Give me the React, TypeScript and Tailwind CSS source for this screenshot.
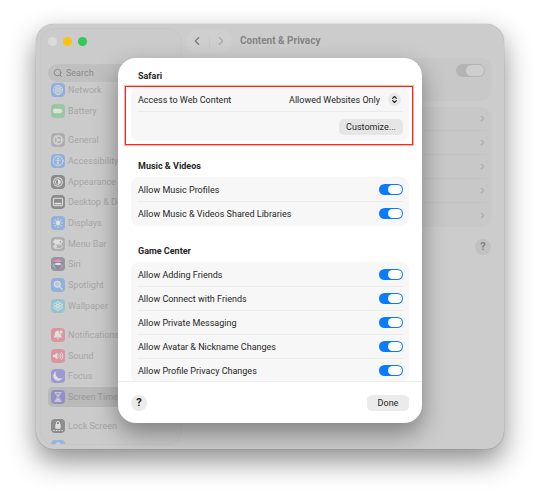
import type { ReactNode } from "react";
import { ChevronLeft, ChevronRight, ChevronsUpDown, Search } from "lucide-react";

type SidebarItem = {
  label: string;
  tint: string;
  glyph: ReactNode;
  selected?: boolean;
};

const white = { fill: "none", stroke: "#fff", strokeWidth: 1.5, strokeLinecap: "round", strokeLinejoin: "round" } as const;

const glyphs = {
  network: (
    <g {...white} strokeWidth={1.2}>
      <circle cx="13" cy="13" r="8.5" />
      <ellipse cx="13" cy="13" rx="4" ry="8.5" />
      <path d="M4.5 13h17M6 8.5c4 2.2 10 2.2 14 0M6 17.5c4-2.2 10-2.2 14 0M13 4.5v17" />
    </g>
  ),
  battery: (
    <g fill="#fff">
      <rect x="4" y="9" width="16" height="8" rx="2.5" />
      <path d="M21 11.5c1.6.4 1.6 2.6 0 3z" />
    </g>
  ),
  general: (
    <g {...white}>
      <circle cx="13" cy="13" r="7.5" strokeWidth="2" />
      <circle cx="13" cy="13" r="9" strokeDasharray="1.2 1.6" strokeLinecap="butt" />
      <circle cx="13" cy="13" r="2" />
      <path d="M15 13h5.5M12 11.3l-3-5M12 14.7l-3 5" />
    </g>
  ),
  accessibility: (
    <g {...white}>
      <circle cx="13" cy="13" r="9" />
      <circle cx="13" cy="8.5" r="1" fill="#fff" />
      <path d="M8.5 11.2l4.5.8 4.5-.8M13 12v3l-2 4.5M13 15l2 4.5" />
    </g>
  ),
  appearance: (
    <g>
      <circle cx="13" cy="13" r="8" {...white} strokeWidth={2} />
      <path d="M13 8a5 5 0 0 1 0 10z" fill="#fff" />
      <path d="M13 8a5 5 0 0 0 0 10" {...white} />
    </g>
  ),
  desktop: (
    <g {...white} strokeWidth={2}>
      <rect x="4.5" y="6" width="17" height="14" rx="2.5" />
      <path d="M8 16h10" strokeWidth="3" />
    </g>
  ),
  displays: (
    <g {...white} strokeWidth={2}>
      <circle cx="13" cy="13" r="3.5" fill="#fff" />
      <path d="M13 5v1M13 20v1M5 13h1M20 13h1M7.4 7.4l.6.6M18 18l.6.6M18.6 7.4l-.6.6M8 18l-.6.6" />
    </g>
  ),
  menuBar: (
    <g {...white}>
      <rect x="5" y="5.5" width="16" height="6.5" rx="3.25" fill="#fff" />
      <rect x="5" y="14.5" width="16" height="6.5" rx="3.25" />
      <circle cx="17.5" cy="8.75" r="1.8" fill="#777" stroke="none" />
      <circle cx="8.5" cy="17.75" r="1.8" fill="#fff" />
    </g>
  ),
  siri: (
    <g>
      <circle cx="13" cy="13" r="10" fill="#2b2440" />
      <path d="M4 9c4-7 14-7 18 1-5-2-12 0-18-1z" fill="#e8408c" />
      <path d="M3.5 11c4 2 3 8 8 11-6-1-9-6-8-11z" fill="#24c0d8" />
      <path d="M22.5 12c0 6-4 10-9 10 5-2 4-7 9-10z" fill="#4a7df0" />
      <path d="M6 13c4-3 10-3 14 0-4 3-10 3-14 0z" fill="#fff" />
    </g>
  ),
  spotlight: (
    <g {...white} strokeWidth={2.2}>
      <circle cx="11.5" cy="11.5" r="5.5" fill="#ffffff80" />
      <path d="M16 16l5 5" />
    </g>
  ),
  wallpaper: (
    <g {...white}>
      <circle cx="13" cy="13" r="2.2" />
      <ellipse cx="13" cy="7.5" rx="2.6" ry="3" />
      <ellipse cx="13" cy="18.5" rx="2.6" ry="3" />
      <ellipse cx="8" cy="10.2" rx="3" ry="2.6" />
      <ellipse cx="18" cy="10.2" rx="3" ry="2.6" />
      <ellipse cx="8" cy="15.8" rx="3" ry="2.6" />
      <ellipse cx="18" cy="15.8" rx="3" ry="2.6" />
    </g>
  ),
  notifications: (
    <g fill="#fff">
      <path d="M12.5 5c-4 0-5.5 3-5.5 6 0 3.5-1 4.5-2.5 6.5h16.5c-1.5-1.5-2.5-3-2.5-5.5a4 4 0 0 1-3.5-6.2C14.3 5.2 13.5 5 12.5 5z" />
      <path d="M10.5 19h4.5a2.3 2.3 0 0 1-4.5 0z" />
      <circle cx="18.5" cy="7.5" r="3" />
    </g>
  ),
  sound: (
    <g>
      <path d="M3.5 10.5h3.5l5-4.5v14l-5-4.5H3.5z" fill="#fff" />
      <path d="M14.5 10.5c1.3 1.5 1.3 3.5 0 5M17 8.5c2.3 2.7 2.3 6.3 0 9M19.5 6.5c3.5 4 3.5 9 0 13" {...white} strokeWidth={1.7} />
    </g>
  ),
  focus: <path d="M10 4.5a9 9 0 1 0 11.5 11.8A8.5 8.5 0 0 1 10 4.5z" fill="#fff" />,
  screenTime: (
    <g>
      <path d="M7 5h12M7 21h12" {...white} strokeWidth={2} />
      <path d="M8.5 5.5c0 4.5 3.3 5 3.3 7.5s-3.3 3-3.3 7.5M17.5 5.5c0 4.5-3.3 5-3.3 7.5s3.3 3 3.3 7.5" {...white} />
      <path d="M10 8.5h6l-3 3.5zM9.5 20c.5-3 2-4 3.5-4s3 1 3.5 4z" fill="#fff" />
    </g>
  ),
  lock: (
    <g>
      <rect x="8" y="9.5" width="10" height="8.5" rx="1.5" fill="#fff" />
      <path d="M10 10V7.5a3 3 0 0 1 6 0V10" {...white} strokeWidth={1.8} />
      <path d="M5 21.5h16" {...white} strokeWidth={2} strokeDasharray="1 4" />
    </g>
  ),
  hand: <path d="M8 12V8m3.3 4V5.5m3.4 6.5V5.5M18 13V8M8 12v4c0 7 10 7 10 0v-3" {...white} strokeWidth={2.4} />,
};

const groups: { height: string; items: SidebarItem[] }[] = [
  {
    height: "h-[41px]",
    items: [
      { label: "Network", tint: "bg-[#3b88f5]", glyph: glyphs.network },
      { label: "Battery", tint: "bg-[#4cc864]", glyph: glyphs.battery },
    ],
  },
  {
    height: "h-[186px]",
    items: [
      { label: "General", tint: "bg-[#85858a]", glyph: glyphs.general },
      { label: "Accessibility", tint: "bg-[#3b88f5]", glyph: glyphs.accessibility },
      { label: "Appearance", tint: "bg-[#303033]", glyph: glyphs.appearance },
      { label: "Desktop & Dock", tint: "bg-[#303033]", glyph: glyphs.desktop },
      { label: "Displays", tint: "bg-[#3b88f5]", glyph: glyphs.displays },
      { label: "Menu Bar", tint: "bg-[#85858a]", glyph: glyphs.menuBar },
      { label: "Siri", tint: "bg-[#54405c]", glyph: glyphs.siri },
      { label: "Spotlight", tint: "bg-[#3b88f5]", glyph: glyphs.spotlight },
      { label: "Wallpaper", tint: "bg-[#3dbdd8]", glyph: glyphs.wallpaper },
    ],
  },
  {
    height: "h-[82px]",
    items: [
      { label: "Notifications", tint: "bg-[#f5455a]", glyph: glyphs.notifications },
      { label: "Sound", tint: "bg-[#f5455f]", glyph: glyphs.sound },
      { label: "Focus", tint: "bg-[#5a50dc]", glyph: glyphs.focus },
      { label: "Screen Time", tint: "bg-[#5a50dc]", glyph: glyphs.screenTime, selected: true },
    ],
  },
  {
    height: "h-[41px]",
    items: [
      { label: "Lock Screen", tint: "bg-[#303033]", glyph: glyphs.lock },
      { label: "", tint: "bg-[#3b98f5]", glyph: glyphs.hand },
    ],
  },
];

function Sidebar() {
  return (
    <aside className="m-1 flex w-[142px] shrink-0 flex-col overflow-hidden rounded-[14px] border border-[#c7c7c7] bg-[#cbcbcb] px-[7px]">
      <div className="mt-2 flex gap-[6px]">
        <button aria-label="Close" className="size-[9px] rounded-full bg-[#dadada]" />
        <button aria-label="Minimize" className="size-[9px] rounded-full bg-[#fcc212]" />
        <button aria-label="Zoom" className="size-[9px] rounded-full bg-[#34c759]" />
      </div>
      <label className="mt-[18px] flex h-[18px] shrink-0 items-center gap-[3px] rounded-full bg-[#c0c0c0] pl-[5px] text-[#858585]">
        <Search size={10} strokeWidth={2.2} className="shrink-0" />
        <input
          type="search"
          aria-label="Search"
          placeholder="Search"
          className="w-full min-w-0 bg-transparent text-[9px] leading-3 outline-none placeholder:text-[#8a8a8a]"
        />
      </label>
      <nav className="-mt-[2px] flex flex-col gap-[9px]">
        {groups.map((group, i) => (
          <ul key={i} className={`flex shrink-0 flex-col ${group.height}`}>
            {group.items.map((item) => (
              <li key={item.label} className="flex min-h-0 flex-1">
                <a
                  href="#"
                  className={`flex flex-1 items-center gap-[3px] rounded-[5px] pl-[3px] text-[9px] leading-3 whitespace-nowrap ${item.selected ? "bg-[#b9b9b9] text-[#999999]" : "text-[#a6a6a6]"}`}
                >
                  <span className={`size-[14px] shrink-0 overflow-hidden rounded-[4px] opacity-40 ${item.tint}`}>
                    <svg viewBox="0 0 26 26" className="size-full" aria-hidden="true">
                      {item.glyph}
                    </svg>
                  </span>
                  {item.label}
                </a>
              </li>
            ))}
          </ul>
        ))}
      </nav>
    </aside>
  );
}

function ContentPane() {
  return (
    <main className="flex min-w-0 flex-1 flex-col pr-[13px]">
      <header className="mt-[5px] flex h-6 items-center gap-2">
        <div className="flex h-6 w-[46px] items-center rounded-full bg-[#cfcfcf]">
          <button aria-label="Back" className="flex flex-1 justify-center text-[#777777]">
            <ChevronLeft size={14} strokeWidth={2} />
          </button>
          <span className="h-3 w-px bg-[#c8c8c8]" />
          <button aria-label="Forward" className="flex flex-1 justify-center text-[#aaaaaa]">
            <ChevronRight size={14} strokeWidth={2} />
          </button>
        </div>
        <h1 className="text-[10px] leading-4 font-bold text-[#858585]">Content &amp; Privacy</h1>
      </header>
      <section className="mt-[5px] ml-2 h-[43px] rounded-[9px] bg-[#c8c8c8] px-[6px] pt-[6px]">
        <input
          type="checkbox"
          aria-label="Content & Privacy"
          defaultChecked
          className="ml-auto flex h-[13px] w-[29px] appearance-none justify-end rounded-full bg-[#b4b4b4] p-px before:h-full before:w-[18px] before:rounded-full before:bg-[#cecece]"
        />
      </section>
      <ul className="mt-[6px] ml-2 rounded-[9px] bg-[#c8c8c8] px-1">
        {[1, 2, 3, 4, 5].map((n) => (
          <li key={n} className="flex h-6 items-center justify-end border-b border-[#c2c2c2] last:border-0">
            <ChevronRight size={9} strokeWidth={3} className="text-[#adadad]" />
          </li>
        ))}
      </ul>
      <button
        aria-label="Help"
        className="mt-3 size-4 self-end rounded-full bg-[#c1c1c1] text-[11px] leading-4 font-bold text-[#808080]"
      >
        ?
      </button>
    </main>
  );
}

function ToggleRow({ label }: { label: string }) {
  return (
    <label className="mr-[6px] ml-[7px] flex h-6 items-center justify-between border-b border-[#ebebeb] last:border-b-transparent">
      {label}
      <input
        type="checkbox"
        defaultChecked
        className="flex h-[11px] w-6 appearance-none justify-end rounded-full bg-[#0a7aff] p-px before:h-full before:w-[14px] before:rounded-full before:bg-white"
      />
    </label>
  );
}

function Section({ title, children }: { title: string; children: ReactNode }) {
  return (
    <section>
      <h2 className="mb-[3px] pl-[7px] leading-4 font-bold">{title}</h2>
      <div className="relative rounded-[8px] bg-[#f7f7f7] pt-px">{children}</div>
    </section>
  );
}

function RestrictionsDialog() {
  return (
    <div
      role="dialog"
      aria-label="App restrictions"
      className="flex w-full max-w-[304px] flex-col overflow-hidden rounded-[18px] bg-white text-[9px] leading-3 text-[#262626] shadow-[0_10px_24px_rgba(0,0,0,0.38)]"
    >
      <div className="flex min-h-0 flex-1 flex-col gap-[17px] overflow-hidden px-[13px] pt-[10px]">
        <Section title="Safari">
          <div className="mr-[6px] ml-[7px] flex h-6 items-center justify-between border-b border-[#ebebeb]">
            <label htmlFor="web-access">Access to Web Content</label>
            <div className="relative mr-[2px] flex items-center">
              <select id="web-access" className="appearance-none bg-transparent pr-[21px] outline-none [text-align-last:right]">
                <option>Allowed Websites Only</option>
                <option>Unrestricted</option>
              </select>
              <span className="pointer-events-none absolute right-0 flex size-[13px] items-center justify-center rounded-full bg-[#e8e8e8]">
                <ChevronsUpDown size={9} strokeWidth={3} />
              </span>
            </div>
          </div>
          <div className="mr-[6px] ml-[7px] flex h-[29px] items-center justify-end">
            <button className="h-4 w-16 rounded-[5px] bg-[#e6e6e6]">Customize...</button>
          </div>
          <div className="pointer-events-none absolute -top-px -right-1 -bottom-1 -left-[6px] border border-[#ff2617] shadow-[0_0_0_1px_rgba(255,38,23,0.35)]" />
        </Section>
        <Section title="Music & Videos">
          <ToggleRow label="Allow Music Profiles" />
          <ToggleRow label="Allow Music & Videos Shared Libraries" />
        </Section>
        <Section title="Game Center">
          <ToggleRow label="Allow Adding Friends" />
          <ToggleRow label="Allow Connect with Friends" />
          <ToggleRow label="Allow Private Messaging" />
          <ToggleRow label="Allow Avatar & Nickname Changes" />
          <ToggleRow label="Allow Profile Privacy Changes" />
        </Section>
      </div>
      <footer className="flex h-[42px] shrink-0 items-center justify-between border-t border-[#ededed] px-[13px]">
        <button aria-label="Help" className="size-4 rounded-full bg-[#ebebeb] text-[11px] leading-4 font-bold">
          ?
        </button>
        <button className="h-4 w-[42px] rounded-[5px] bg-[#ebebeb]">Done</button>
      </footer>
    </div>
  );
}

export default function App() {
  return (
    <div className="flex h-screen bg-white px-9 pt-6 pb-12 font-['Roboto','Liberation_Sans',sans-serif]">
      <div className="relative flex flex-1 rounded-[18px] bg-[#cccccc] shadow-[0_0_1px_rgba(0,0,0,0.4),0_12px_28px_rgba(0,0,0,0.45)]">
        <Sidebar />
        <ContentPane />
        <div className="absolute inset-0 flex justify-center overflow-hidden rounded-[18px] pt-[34px] pb-[26px]">
          <RestrictionsDialog />
        </div>
      </div>
    </div>
  );
}
